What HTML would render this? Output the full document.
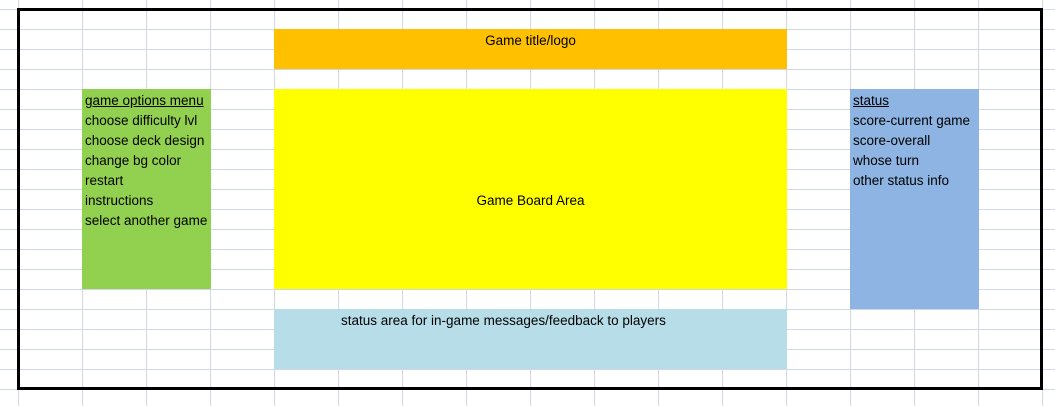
<!DOCTYPE html>
<html><head><style>
html,body{margin:0;padding:0;width:1055px;height:406px;overflow:hidden;background:#fff;position:relative;font-family:"Liberation Sans",sans-serif;}
.grid{position:absolute;left:0;top:0;width:1055px;height:406px;
background-image:linear-gradient(to right,#d0d7e5 1px,transparent 1px),linear-gradient(to bottom,#d0d7e5 1px,transparent 1px);
background-size:64px 20px;background-position:18px 9px;}
.b{position:absolute;}
.t{position:absolute;font-size:13.5px;letter-spacing:0;color:#000;white-space:nowrap;line-height:20px;}
</style></head><body>
<div class="grid"></div>
<div class="b" style="left:274px;top:29px;width:513px;height:40px;background:#ffc000"></div>
<div class="b" style="left:274px;top:89px;width:513px;height:200px;background:#ffff00"></div>
<div class="b" style="left:82px;top:89px;width:129px;height:200px;background:#92d050"></div>
<div class="b" style="left:850px;top:89px;width:129px;height:220px;background:#8db4e2"></div>
<div class="b" style="left:274px;top:309px;width:513px;height:60px;background:#b7dee8"></div>
<div class="b" style="left:17px;top:8px;width:1020px;height:376px;border:3px solid #000"></div>

<div class="t" style="left:274px;width:513px;text-align:center;top:31px">Game title/logo</div>
<div class="t" style="left:274px;width:513px;text-align:center;top:191px">Game Board Area</div>
<div class="t" style="left:341px;top:311px">status area for in-game messages/feedback to players</div>

<div class="t" style="left:85px;top:91px"><u>game options menu</u></div>
<div class="t" style="left:85px;top:111px">choose difficulty lvl</div>
<div class="t" style="left:85px;top:131px">choose deck design</div>
<div class="t" style="left:85px;top:151px">change bg color</div>
<div class="t" style="left:85px;top:171px">restart</div>
<div class="t" style="left:85px;top:191px">instructions</div>
<div class="t" style="left:85px;top:211px">select another game</div>

<div class="t" style="left:853px;top:91px"><u>status</u></div>
<div class="t" style="left:853px;top:111px">score-current game</div>
<div class="t" style="left:853px;top:131px">score-overall</div>
<div class="t" style="left:853px;top:151px">whose turn</div>
<div class="t" style="left:853px;top:171px">other status info</div>
</body></html>
